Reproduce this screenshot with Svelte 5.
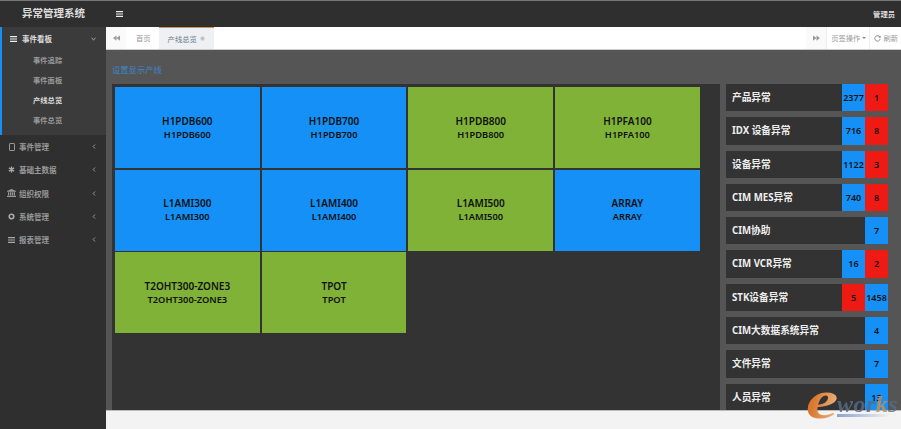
<script>
  const lines = [
    { name: 'H1PDB600', ok: false },
    { name: 'H1PDB700', ok: false },
    { name: 'H1PDB800', ok: true },
    { name: 'H1PFA100', ok: true },
    { name: 'L1AMI300', ok: false },
    { name: 'L1AMI400', ok: false },
    { name: 'L1AMI500', ok: true },
    { name: 'ARRAY', ok: false },
    { name: 'T2OHT300-ZONE3', ok: true },
    { name: 'TPOT', ok: true }
  ];

  const stats = [
    { label: '产品异常', nums: [['blue', 2377], ['red', 1]] },
    { label: 'IDX 设备异常', nums: [['blue', 716], ['red', 8]] },
    { label: '设备异常', nums: [['blue', 1122], ['red', 3]] },
    { label: 'CIM MES异常', nums: [['blue', 740], ['red', 8]] },
    { label: 'CIM协助', nums: [['blue', 7]] },
    { label: 'CIM VCR异常', nums: [['blue', 16], ['red', 2]] },
    { label: 'STK设备异常', nums: [['red', 5], ['blue', 1458]] },
    { label: 'CIM大数据系统异常', nums: [['blue', 4]] },
    { label: '文件异常', nums: [['blue', 7]] },
    { label: '人员异常', nums: [['blue', 13]] }
  ];

  const subs = ['事件追踪', '事件面板', '产线总览', '事件总览'];
  const menus = [
    { label: '事件管理', icon: 'tablet' },
    { label: '基础主数据', icon: 'asterisk' },
    { label: '组织权限', icon: 'bank' },
    { label: '系统管理', icon: 'gear' },
    { label: '报表管理', icon: 'bars' }
  ];
</script>

<div class="page">
  <header class="top">
    <div class="brand">异常管理系统</div>
    <div class="top-rest">
      <svg class="burger" viewBox="0 0 7 6" width="7" height="6"><path d="M0 0h7v1.2H0zM0 2.4h7v1.2H0zM0 4.8h7V6H0z" fill="#eee"/></svg>
      <span class="user">管理员</span>
    </div>
  </header>

  <div class="body">
    <aside class="side">
      <div class="group">
        <div class="group-head">
          <svg viewBox="0 0 7 6" width="7" height="6"><path d="M0 0h7v1.2H0zM0 2.4h7v1.2H0zM0 4.8h7V6H0z" fill="#eee"/></svg>
          <span>事件看板</span>
          <svg class="chev" viewBox="0 0 6 4" width="5" height="4"><path d="M.6.8 3 3 5.4.8" fill="none" stroke="#ccc" stroke-width="1"/></svg>
        </div>
        {#each subs as s, i}
          <div class="sub" class:on={i === 2}>{s}</div>
        {/each}
      </div>
      {#each menus as m}
        <div class="menu">
          <span class="ico">
            {#if m.icon === 'tablet'}
              <svg viewBox="0 0 6 8" width="6" height="8"><rect x=".5" y=".5" width="5" height="7" rx=".6" fill="none" stroke="#9a9a9a"/></svg>
            {:else if m.icon === 'asterisk'}
              <svg viewBox="0 0 8 8" width="7" height="7"><path d="M4 .5v7M1 2.2l6 3.6M7 2.2 1 5.8" stroke="#aaa" stroke-width="1.5"/></svg>
            {:else if m.icon === 'bank'}
              <svg viewBox="0 0 9 8" width="9" height="8"><path d="M4.5 0 9 2v.7H0V2zM1 3.3h1.2v3H1zM3 3.3h1.2v3H3zM4.9 3.3h1.2v3H4.9zM6.8 3.3H8v3H6.8zM0 6.8h9V8H0z" fill="#9a9a9a"/></svg>
            {:else if m.icon === 'gear'}
              <svg viewBox="0 0 8 8" width="7" height="7"><circle cx="4" cy="4" r="2.6" fill="none" stroke="#aaa" stroke-width="1.8"/></svg>
            {:else}
              <svg viewBox="0 0 7 6" width="7" height="6"><path d="M0 0h7v1.2H0zM0 2.4h7v1.2H0zM0 4.8h7V6H0z" fill="#aaa"/></svg>
            {/if}
          </span>
          <span>{m.label}</span>
          <svg class="chev" viewBox="0 0 4 6" width="4" height="5"><path d="M3.2.6 1 3l2.2 2.4" fill="none" stroke="#aaa" stroke-width="1"/></svg>
        </div>
      {/each}
    </aside>

    <main class="main">
      <nav class="tabs">
        <button class="arrow back">
          <svg viewBox="0 0 8 6" width="7" height="6"><path d="M4 0v6L0 3zM8 0v6L4 3z" fill="#999"/></svg>
        </button>
        <span class="tab">首页</span>
        <span class="tab active">产线总览 <i class="close"></i></span>
        <div class="tabs-right">
          <button class="arrow">
            <svg viewBox="0 0 8 6" width="7" height="6"><path d="M0 0v6l4-3zM4 0v6l4-3z" fill="#999"/></svg>
          </button>
          <span class="act">页签操作 <i class="caret"></i></span>
          <span class="act refresh">
            <svg viewBox="0 0 8 8" width="7" height="7"><path d="M6.8 2.6A3.1 3.1 0 1 0 7 4.6" fill="none" stroke="#888" stroke-width="1.1"/><path d="M7.6.6v2.6H5z" fill="#888"/></svg>
            刷新
          </span>
        </div>
      </nav>

      <section class="content">
        <a class="setting" href="#top">设置显示产线</a>
        <div class="board">
          <div class="cards">
            {#each lines as l}
              <div class="card" class:ok={l.ok}>
                <b class="t1">{l.name}</b>
                <b class="t2">{l.name}</b>
              </div>
            {/each}
          </div>
          <div class="stats">
            {#each stats as s}
              <div class="stat">
                <span class="label">{s.label}</span>
                {#each s.nums as [color, n]}
                  <span class="num {color}">{n}</span>
                {/each}
              </div>
            {/each}
          </div>
        </div>
      </section>

      <footer class="foot"></footer>

      <!-- watermark over the corner -->
      <div class="mark" aria-hidden="true">
        <span class="mark-e">e</span><span class="mark-w">wor<em>k</em>s</span>
        <i class="mark-bar"></i>
      </div>
    </main>
  </div>
</div>

<style>
  :global(body) {
    margin: 0;
    background: #2f2f2f;
  }

  .page {
    width: 901px;
    height: 429px;
    overflow: hidden;
    display: flex;
    flex-direction: column;
    font-family: "Noto Sans", "Noto Sans CJK SC", sans-serif;
  }

  .top {
    height: 26px;
    border-top: 1px solid #777;
    background: #2f2f2f;
    display: flex;
    flex: none;
  }

  .brand {
    width: 106px;
    text-align: center;
    padding-left: 1px;
    box-sizing: border-box;
    color: #ddd;
    font-size: 10.5px;
    font-weight: 700;
    line-height: 25px;
  }

  .top-rest {
    flex: 1;
    display: flex;
    align-items: center;
    justify-content: space-between;
    padding: 0 6px 0 10px;
  }

  .user {
    color: #ddd;
    font-size: 7.3px;
    font-weight: 700;
  }

  .body {
    flex: 1;
    display: flex;
    min-height: 0;
  }

  .side {
    width: 106px;
    flex: none;
    background: #2f2f2f;
  }

  .group {
    background: #3b3b3b;
    border-left: 2px solid #1490f6;
    height: 108px;
    box-sizing: border-box;
  }

  .group-head {
    height: 23px;
    display: flex;
    align-items: center;
    gap: 5px;
    padding: 0 10px 0 8px;
    color: #ddd;
    font-size: 7.5px;
    font-weight: 700;
  }

  .chev {
    margin-left: auto;
  }

  .sub {
    height: 20px;
    line-height: 20px;
    padding-left: 31px;
    color: #999;
    font-size: 7.3px;
    font-weight: 700;
  }

  .sub.on {
    color: #ddd;
  }

  .menu {
    height: 23.3px;
    display: flex;
    align-items: center;
    gap: 3px;
    padding: 0 10px 0 7px;
    color: #999;
    font-size: 7.5px;
    font-weight: 700;
  }

  .ico {
    width: 9px;
    display: flex;
    justify-content: center;
  }

  .main {
    flex: 1;
    min-width: 0;
    display: flex;
    flex-direction: column;
    position: relative;
  }

  .tabs {
    height: 23px;
    box-sizing: border-box;
    flex: none;
    background: #fff;
    border-bottom: 1px solid #ccc;
    display: flex;
    align-items: stretch;
    font-size: 7.3px;
    color: #999;
  }

  .arrow {
    width: 20px;
    border: none;
    padding: 0;
    background: #fafafa;
    display: flex;
    align-items: center;
    justify-content: center;
  }

  .tab {
    display: flex;
    align-items: center;
    padding: 0 8px 0 10px;
  }

  .tab.active {
    background: #eef0f3;
    border-top: 1px solid #c8955a;
    color: #6d7a88;
    gap: 3px;
    padding: 0 9px;
  }

  .close {
    width: 3px;
    height: 3px;
    border-radius: 50%;
    background: #bbb;
    border: 1px solid #ddd;
  }

  .tabs-right {
    margin-left: auto;
    display: flex;
  }

  .act {
    display: flex;
    align-items: center;
    gap: 2px;
    padding: 0 3px 0 4px;
    border-left: 1px solid #eee;
    white-space: nowrap;
  }

  .caret {
    border-left: 2px solid transparent;
    border-right: 2px solid transparent;
    border-top: 2px solid #888;
  }

  .content {
    flex: 1;
    min-height: 0;
    overflow: hidden;
    background: #555;
    padding: 12.5px 0 0 6px;
    display: flex;
    flex-direction: column;
  }

  .setting {
    color: #3d85c6;
    font-size: 8.3px;
    line-height: 13px;
    text-decoration: none;
    margin-bottom: 8.5px;
  }

  .board {
    flex: 1;
    min-height: 0;
    display: flex;
    gap: 6px;
  }

  .cards {
    width: 608px;
    box-sizing: border-box;
    background: #333;
    padding: 3px;
    display: grid;
    grid-template-columns: repeat(4, 144.7px);
    grid-auto-rows: 81px;
    gap: 1.5px 2px;
    align-content: start;
  }

  .card {
    background: #1490f6;
    display: flex;
    flex-direction: column;
    align-items: center;
    justify-content: center;
    color: #111;
    padding-bottom: 1px;
    box-sizing: border-box;
  }

  .card.ok {
    background: #7fb236;
  }

  .t1 {
    font-size: 10px;
    font-weight: 600;
  }

  .t2 {
    font-size: 9.3px;
    font-weight: 600;
  }

  .stats {
    width: 162px;
    display: flex;
    flex-direction: column;
    gap: 6px;
  }

  .stat {
    height: 27.3px;
    flex: none;
    display: flex;
    background: #333;
    align-items: stretch;
  }

  .label {
    flex: 1;
    color: #eee;
    font-size: 9.7px;
    font-weight: 700;
    line-height: 27px;
    padding-left: 6px;
    white-space: nowrap;
  }

  .num {
    width: 23px;
    text-align: center;
    font-size: 9px;
    font-weight: 600;
    line-height: 27px;
    color: #111;
  }

  .num.blue {
    background: #1490f6;
  }

  .num.red {
    background: #ee1a14;
  }

  .foot {
    height: 19px;
    flex: none;
    background: #f3f3f3;
    border-top: 1px solid #bbb;
    box-sizing: border-box;
  }

  .mark {
    position: absolute;
    left: 700px;
    top: 368px;
    width: 88px;
    height: 24px;
    pointer-events: none;
  }

  .mark-e {
    position: absolute;
    left: 0;
    top: -22px;
    font: italic 700 54px/54px "Liberation Serif", serif;
    background: linear-gradient(100deg, #d9772e 30%, #f0c090);
    -webkit-background-clip: text;
    background-clip: text;
    color: transparent;
    transform: scaleX(1.35);
    transform-origin: left center;
  }

  .mark-w {
    position: absolute;
    left: 31px;
    top: 1px;
    font: italic 700 24px/16px "Liberation Serif", serif;
    color: #566b85;
    letter-spacing: .5px;
    opacity: .85;
  }

  .mark-w em {
    color: #c9914f;
  }

  .mark-bar {
    position: absolute;
    left: 31px;
    bottom: 2px;
    width: 53px;
    height: 3px;
    background: linear-gradient(90deg, #8ea0d0, #f3f3f3);
  }
</style>
